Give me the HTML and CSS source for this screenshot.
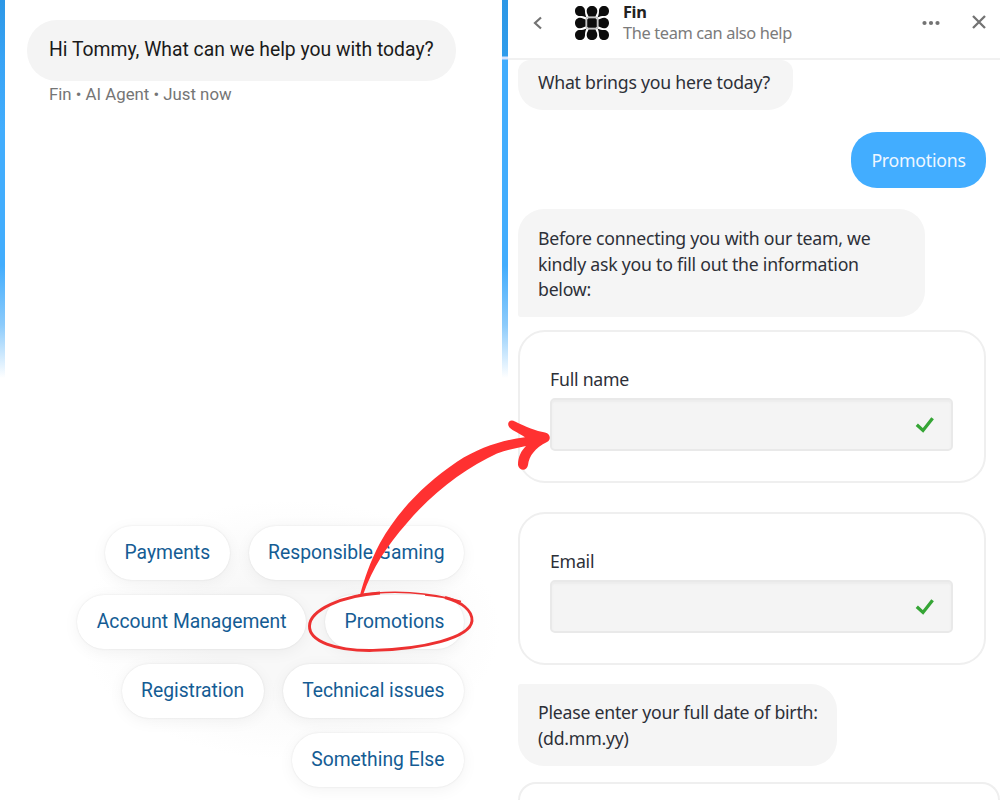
FILE: index.html
```
<!DOCTYPE html>
<html lang="en">
<head>
    <meta charset="UTF-8">
    <title>Fin chat</title>
    <link rel="stylesheet" href="styles.css">
</head>
<body>

<div class="layout">
    <!-- first chat screen -->
    <div class="chat_left">
        <div class="bubble_hello">Hi Tommy, What can we help you with today?</div>
        <p class="agent">Fin • AI Agent • Just now</p>

        <div class="options">
            <div class="option_row">
                <a class="option">Payments</a>
                <a class="option">Responsible Gaming</a>
            </div>
            <div class="option_row">
                <a class="option">Account Management</a>
                <a class="option">Promotions</a>
            </div>
            <div class="option_row">
                <a class="option">Registration</a>
                <a class="option">Technical issues</a>
            </div>
            <div class="option_row">
                <a class="option">Something Else</a>
            </div>
        </div>
    </div>

    <!-- second chat screen -->
    <div class="chat_right">
        <div class="header">
            <svg class="back" width="12" height="16" viewBox="0 0 12 16">
                <path d="M9 2.5 L3 8 L9 13.5" fill="none" stroke="#737373" stroke-width="2.2"/>
            </svg>
            <svg class="logo" width="36" height="36" viewBox="0 0 36 36">
                <path d="M12.3 12.3 H23.7 V23.7 H12.3Z" fill="none" stroke="#b5b5b5" stroke-width="1"/>
                <g fill="#0c0c0c">
                    <path d="M6 1 C9 1 11 3 11 6 C11 8.500 11.500 10 12.300 12.300 C10 11.500 8.500 11 6 11 C3 11 1 9 1 6 C1 3 3 1 6 1Z"/>
                    <path d="M30 1 C27 1 25 3 25 6 C25 8.500 24.500 10 23.700 12.300 C26 11.500 27.500 11 30 11 C33 11 35 9 35 6 C35 3 33 1 30 1Z"/>
                    <path d="M6 35 C9 35 11 33 11 30 C11 27.500 11.500 26 12.300 23.700 C10 24.500 8.500 25 6 25 C3 25 1 27 1 30 C1 33 3 35 6 35Z"/>
                    <path d="M30 35 C27 35 25 33 25 30 C25 27.500 24.500 26 23.700 23.700 C26 24.500 27.500 25 30 25 C33 25 35 27 35 30 C35 33 33 35 30 35Z"/>
                    <path d="M18 1 C21 1 23.300 3 23.300 6 C23.300 8.500 22 9.500 21.500 11.500 H14.500 C14 9.500 12.700 8.500 12.700 6 C12.700 3 15 1 18 1Z"/>
                    <path d="M18 35 C21 35 23.300 33 23.300 30 C23.300 27.500 22 26.500 21.500 24.500 H14.500 C14 26.500 12.700 27.500 12.700 30 C12.700 33 15 35 18 35Z"/>
                    <path d="M1 18 C1 15 3 12.700 6 12.700 C8.500 12.700 9.500 14 11.500 14.500 V21.500 C9.500 22 8.500 23.300 6 23.300 C3 23.300 1 21 1 18Z"/>
                    <path d="M35 18 C35 15 33 12.700 30 12.700 C27.500 12.700 26.500 14 24.500 14.500 V21.500 C26.500 22 27.500 23.300 30 23.300 C33 23.300 35 21 35 18Z"/>
                    <rect x="13.200" y="13.200" width="9.600" height="9.600" rx="1.500"/>
                </g>
            </svg>
            <div class="title">
                <p>Fin</p>
                <p>The team can also help</p>
            </div>
            <svg class="more" width="20" height="6" viewBox="0 0 20 6">
                <g fill="#737373">
                    <circle cx="3.5" cy="3" r="2.1"/>
                    <circle cx="10" cy="3" r="2.1"/>
                    <circle cx="16.5" cy="3" r="2.1"/>
                </g>
            </svg>
            <svg class="close" width="16" height="16" viewBox="0 0 16 16">
                <path d="M2 2 L14 14 M14 2 L2 14" stroke="#737373" stroke-width="2.3"/>
            </svg>
        </div>

        <div class="messages">
            <div class="bubble first">What brings you here today?</div>
            <div class="bubble_user">Promotions</div>
            <div class="bubble middle">Before connecting you with our team, we<br>kindly ask you to fill out the information<br>below:</div>
            <div class="card">
                <label>Full name</label>
                <div class="field">
                    <svg width="20" height="18" viewBox="0 0 20 18">
                        <path d="M1.8 8.8 L8 14.4 L17.6 2.2" fill="none" stroke="#35a535" stroke-width="3.3"/>
                    </svg>
                </div>
            </div>
            <div class="card">
                <label>Email</label>
                <div class="field">
                    <svg width="20" height="18" viewBox="0 0 20 18">
                        <path d="M1.8 8.8 L8 14.4 L17.6 2.2" fill="none" stroke="#35a535" stroke-width="3.3"/>
                    </svg>
                </div>
            </div>
            <div class="bubble last">Please enter your full date of birth:<br>(dd.mm.yy)</div>
            <div class="card next"></div>
        </div>
    </div>
</div>

<!-- hand drawn circle and arrow over both screens -->
<svg class="mark" width="1000" height="800" viewBox="0 0 1000 800">
    <path d="M360 595 C364 580 370 562 380 543 C398 511 424 484 457 461.700 C480 447 503 440 525 437.300 C519 433 513 431 509.500 427.500 C506 423 510 418.500 515 421.500 C526 427 536 431 545 432.500 C551 434 551 440 547 442 C535 448 529 456 528 465 C527 471.500 519 471 518 465 C518 457 521 451 526 446 C516 448 507 450 497 453.500 C466 468 433 492 407 523 C386 547 373 567 363 595Z" fill="#ff3131"/>
    <path d="M445 597.500 C461 602 472.500 610 472 621 C470 638 423 649 373 650.400 C335 651 309 641 309.500 626 C310 610 342 595.500 380 593" fill="none" stroke="#ed3131" stroke-width="2.9"/>
    <path d="M358 595.500 C390 589.500 430 592 461 601.500 C448 598 438 596 425 595" fill="none" stroke="#ed3131" stroke-width="1.5"/>
</svg>

</body>
</html>
```
FILE: styles.css
```
*{
    margin: 0;
    padding: 0;
    box-sizing: border-box;
}
body{
    background: #fff;
    overflow: hidden;
}
.layout{
    display: flex;
    width: 1000px;
    height: 800px;
}

/* left screen */
.chat_left{
    width: 508px;
    height: 800px;
    padding: 20px 44px 0 27px;
    display: flex;
    flex-direction: column;
    align-items: flex-start;
    font-family: Roboto, sans-serif;
    /* blue strips on both edges */
    background:
        linear-gradient(#2c97e6 0, #38a3f5 60px, #42adfd 130px, #42adfd 265px, #8ccbfb 325px, #fff 378px) left top / 5px 100% no-repeat,
        linear-gradient(#2c97e6 0, #2f9ceb 56px, #d5e3ff 57px, #d5e3ff 59px, #42adfd 60px, #42adfd 265px, #8ccbfb 325px, #fff 378px) 502px top / 6px 100% no-repeat,
        radial-gradient(ellipse 210px 130px at 290px 630px, #f8f8f8 40%, #fff 100%);
}
.bubble_hello{
    height: 61px;
    width: 429px;
    padding-left: 22px;
    border-radius: 30px;
    background: #f4f4f4;
    color: #1a1a1a;
    font-size: 19.33px;
    line-height: 60px;
    white-space: nowrap;
}
.agent{
    padding: 3px 0 0 22px;
    color: #757575;
    font-size: 16.8px;
    line-height: 20px;
    white-space: nowrap;
}
.options{
    width: 100%;
    margin-top: auto;
    margin-bottom: 13px;
    display: flex;
    flex-direction: column;
    gap: 15px;
}
.option_row{
    display: flex;
    justify-content: flex-end;
    gap: 19px;
}
.option{
    height: 54px;
    padding: 0 19.5px;
    border-radius: 27px;
    background: #fff;
    box-shadow: 0 0 2px rgba(0,0,0,.1), 0 3px 16px rgba(0,0,0,.05);
    color: #145c94;
    font-size: 19.3px;
    line-height: 53px;
    white-space: nowrap;
}

/* right screen */
.chat_right{
    width: 492px;
    height: 800px;
    font-family: "Noto Sans", sans-serif;
    font-size: 17.7px;
    letter-spacing: -0.24px;
    color: #2d3038;
}
.header{
    height: 60px;
    border-bottom: 2px solid #f1f1f1;
    display: flex;
    align-items: flex-start;
}
.back{
    margin: 15px 0 0 24px;
}
.logo{
    margin: 5px 0 0 30px;
}
.title{
    margin-left: 13px;
    flex: 1;
    font-size: 16.4px;
    letter-spacing: -0.38px;
    line-height: 21px;
    white-space: nowrap;
}
.title > p:first-child{
    margin-top: 1px;
    font-weight: bold;
    color: #222;
}
.title > p:last-child{
    color: #7b7b7b;
}
.more{
    margin: 20px 30px 0 0;
}
.close{
    margin: 14px 13px 0 0;
}
.messages{
    display: flex;
    flex-direction: column;
    align-items: flex-start;
    padding: 0 14px 0 10px;
}
.bubble{
    padding: 0 20px;
    background: #f5f5f5;
    line-height: 25.7px;
    white-space: nowrap;
}
.first{
    width: 275px;
    height: 50px;
    padding-top: 10px;
    border-radius: 12px 12px 25px 25px;
}
.bubble_user{
    width: 135px;
    height: 56px;
    margin-top: 22px;
    align-self: flex-end;
    border-radius: 26px;
    background: #42adff;
    color: #eef7ff;
    text-align: center;
    line-height: 56px;
}
.middle{
    width: 407px;
    height: 108px;
    margin-top: 21px;
    padding-top: 17px;
    border-radius: 26px 26px 26px 3px;
}
.card{
    width: 468px;
    height: 153px;
    margin-top: 13px;
    padding: 35px 31px 0 30px;
    border: 2px solid #efefef;
    border-radius: 27px;
}
.card + .card{
    margin-top: 29px;
}
.card label{
    display: block;
    height: 31px;
    line-height: 24px;
}
.field{
    height: 53px;
    padding-right: 16px;
    border: 2px solid #e9e9e9;
    border-radius: 5px;
    background: #f4f4f4;
    box-shadow: inset 0 2px 2px #ececec;
    display: flex;
    align-items: center;
    justify-content: flex-end;
}
.last{
    width: 319px;
    height: 82px;
    margin-top: 19px;
    padding-top: 16px;
    border-radius: 3px 26px 26px 26px;
}
.next{
    width: 482px;
    height: 18px;
    margin-top: 16px;
    padding: 0;
    border-bottom: 0;
    border-radius: 27px 27px 0 0;
}
.mark{
    position: absolute;
    left: 0;
    top: 0;
}
```
